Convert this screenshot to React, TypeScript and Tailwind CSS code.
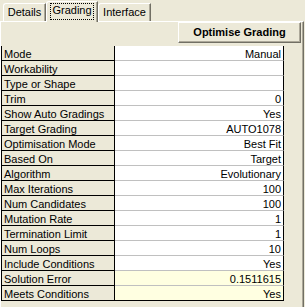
import React from "react";

type Row = { label: string; value: string; note?: boolean };

const rows: Row[] = [
  { label: "Mode", value: "Manual" },
  { label: "Workability", value: "" },
  { label: "Type or Shape", value: "" },
  { label: "Trim", value: "0" },
  { label: "Show Auto Gradings", value: "Yes" },
  { label: "Target Grading", value: "AUTO1078" },
  { label: "Optimisation Mode", value: "Best Fit" },
  { label: "Based On", value: "Target" },
  { label: "Algorithm", value: "Evolutionary" },
  { label: "Max Iterations", value: "100" },
  { label: "Num Candidates", value: "100" },
  { label: "Mutation Rate", value: "1" },
  { label: "Termination Limit", value: "1" },
  { label: "Num Loops", value: "10" },
  { label: "Include Conditions", value: "Yes" },
  { label: "Solution Error", value: "0.1511615", note: true },
  { label: "Meets Conditions", value: "Yes", note: true },
];

export default function App() {
  return (
    <div
      className="w-[305px] h-[307px] overflow-hidden bg-[#ece9d8] text-black text-[11px]"
      style={{ fontFamily: '"Liberation Sans", Arial, sans-serif' }}
    >
      {/* tabs */}
      <div className="flex items-end h-[21px]">
        <div className="ml-[3px] w-[43px] h-[18px] flex justify-center pt-[2px] leading-[13px] border-t border-l border-white border-r border-r-[#716f64] shadow-[inset_-1px_0_0_#aca899] rounded-tl-[3px]">
          Details
        </div>
        <div className="relative z-10 -mb-px w-[52px] h-[21px] bg-[#ece9d8] border-t border-l border-white border-r border-r-[#716f64] shadow-[inset_-1px_0_0_#aca899] rounded-tl-[3px]">
          <div className="mx-[3px] mt-[1px] h-[17px] border border-dotted border-black flex justify-center leading-[13px]">
            Grading
          </div>
        </div>
        <div className="w-[53px] h-[18px] flex justify-center pt-[2px] leading-[13px] border-t border-l border-white border-r border-r-[#716f64] shadow-[inset_-1px_0_0_#aca899] rounded-tl-[3px]">
          Interface
        </div>
      </div>

      {/* panel */}
      <div className="w-[304px] h-[286px] border-t border-l border-white border-r border-r-[#716f64] shadow-[inset_-1px_0_0_#aca899]">
        <div className="flex justify-end">
          <button className="mr-[2px] w-[123px] h-[21px] font-bold leading-[13px] border-t border-l border-white border-b border-r border-b-[#716f64] border-r-[#716f64] shadow-[inset_-1px_-1px_0_#aca899]">
            Optimise Grading
          </button>
        </div>

        <div className="mt-[3px] w-[283px] border-l border-black">
          {rows.map((r, i) => {
            const last = i === rows.length - 1;
            return (
              <div key={r.label} className="flex h-[15px] leading-[14px]">
                <div className="w-[113px] pl-[2px] pt-px border-r border-b border-black whitespace-nowrap">
                  {r.label}
                </div>
                <div
                  className={`w-[169px] pr-[2px] pt-px text-right border-r border-r-black border-b ${
                    last ? "border-b-black" : "border-b-[#c0c0c0]"
                  } ${r.note ? "bg-[#ffffe1]" : "bg-white"}`}
                >
                  {r.value}
                </div>
              </div>
            );
          })}
        </div>
      </div>
    </div>
  );
}
